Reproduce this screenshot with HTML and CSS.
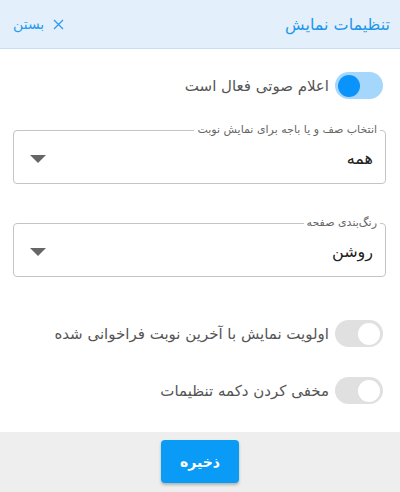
FILE: index.html
```html
<!DOCTYPE html>
<html lang="fa" dir="rtl">
<head>
    <meta charset="UTF-8">
    <meta name="viewport" content="width=device-width, initial-scale=1.0">
    <title>تنظیمات نمایش</title>
    <link rel="stylesheet" href="styles.css">
</head>
<body>
    <div class="dialog">
        <!-- Header -->
        <div class="dialog-header">
            <span class="dialog-title">تنظیمات نمایش</span>
            <button class="close-btn" type="button">
                <svg class="close-icon" width="11" height="11" viewBox="0 0 11 11">
                    <path d="M1 1 L10 10 M10 1 L1 10" stroke="currentColor" stroke-width="1.3" fill="none"/>
                </svg>
                <span>بستن</span>
            </button>
        </div>

        <div class="dialog-body">
            <label class="switch-row row-sound">
                <span class="switch on"><span class="knob"></span></span>
                <span class="switch-label">اعلام صوتی فعال است</span>
            </label>

            <fieldset class="select-field field-queue">
                <legend>انتخاب صف و یا باجه برای نمایش نوبت</legend>
                <div class="select-value">
                    <span>همه</span>
                    <span class="arrow"></span>
                </div>
            </fieldset>

            <fieldset class="select-field field-theme">
                <legend>رنگ‌بندی صفحه</legend>
                <div class="select-value">
                    <span>روشن</span>
                    <span class="arrow"></span>
                </div>
            </fieldset>

            <label class="switch-row row-priority">
                <span class="switch"><span class="knob"></span></span>
                <span class="switch-label">اولویت نمایش با آخرین نوبت فراخوانی شده</span>
            </label>

            <label class="switch-row row-hide">
                <span class="switch"><span class="knob"></span></span>
                <span class="switch-label">مخفی کردن دکمه تنظیمات</span>
            </label>
        </div>

        <!-- Footer -->
        <div class="dialog-footer">
            <button class="save-btn" type="button">ذخیره</button>
        </div>
    </div>
</body>
</html>
```

FILE: styles.css
```css
body {
    margin: 0;
    background: #fff;
    font-family: "DejaVu Sans", "Noto Sans", sans-serif;
    direction: rtl;
}

.dialog {
    width: 400px;
    height: 492px;
    display: flex;
    flex-direction: column;
}

.dialog-header {
    height: 48px;
    background: #e3f0fc;
    border-bottom: 1px solid #c9ddf0;
    display: flex;
    align-items: center;
    justify-content: space-between;
    padding: 0 10px 0 13px;
}

.dialog-title {
    color: #1e96ea;
    font-size: 16px;
}

.close-btn {
    display: flex;
    align-items: center;
    gap: 9px;
    background: none;
    border: none;
    padding: 0;
    color: #2b9bf0;
    font-family: inherit;
    font-size: 14px;
}

.dialog-body {
    flex: 1;
    display: flex;
    flex-direction: column;
}

/* switches */
.switch-row {
    display: flex;
    align-items: center;
    gap: 6px;
    padding-right: 17px;
}

.row-sound { margin-top: 23px; }
.row-priority { margin-top: 43px; }
.row-hide { margin-top: 30px; }

.switch {
    width: 48px;
    height: 27px;
    border-radius: 14px;
    background: #e0e0e0;
    display: flex;
    align-items: center;
    justify-content: flex-start;
    padding: 0 3px;
    box-sizing: border-box;
    flex-shrink: 0;
}

.switch .knob {
    width: 22px;
    height: 22px;
    border-radius: 50%;
    background: #fff;
}

.switch.on {
    background: #a5d6fb;
    justify-content: flex-end;
}

.switch.on .knob {
    background: #0a93fb;
}

.switch-label {
    font-size: 15px;
    color: #555;
}

/* outlined selects */
.select-field {
    margin: 0 14px 0 13px;
    padding: 0 12px;
    border: 1px solid #c4c4c4;
    border-radius: 4px;
    min-width: 0;
}

.field-queue { margin-top: 25px; }
.field-theme { margin-top: 33px; }

.select-field legend {
    font-size: 11px;
    color: #666;
    padding: 0 3px;
    margin-right: -7px;
    line-height: 12px;
}

.select-value {
    height: 47px;
    display: flex;
    align-items: center;
    justify-content: space-between;
    font-size: 16px;
    color: #222;
    padding-bottom: 2px;
    box-sizing: border-box;
}

.arrow {
    width: 0;
    height: 0;
    border-left: 8px solid transparent;
    border-right: 8px solid transparent;
    border-top: 8px solid #666;
    margin-left: 4px;
}

/* footer */
.dialog-footer {
    height: 60px;
    background: #eeeeee;
    display: flex;
    justify-content: center;
    align-items: flex-start;
    padding-top: 8px;
    box-sizing: border-box;
}

.save-btn {
    width: 78px;
    height: 43px;
    background: #0a9bf6;
    color: #fff;
    border: none;
    border-radius: 4px;
    font-family: inherit;
    font-size: 14px;
    font-weight: bold;
    box-shadow: 0 2px 3px rgba(0, 0, 0, 0.25);
}
```
